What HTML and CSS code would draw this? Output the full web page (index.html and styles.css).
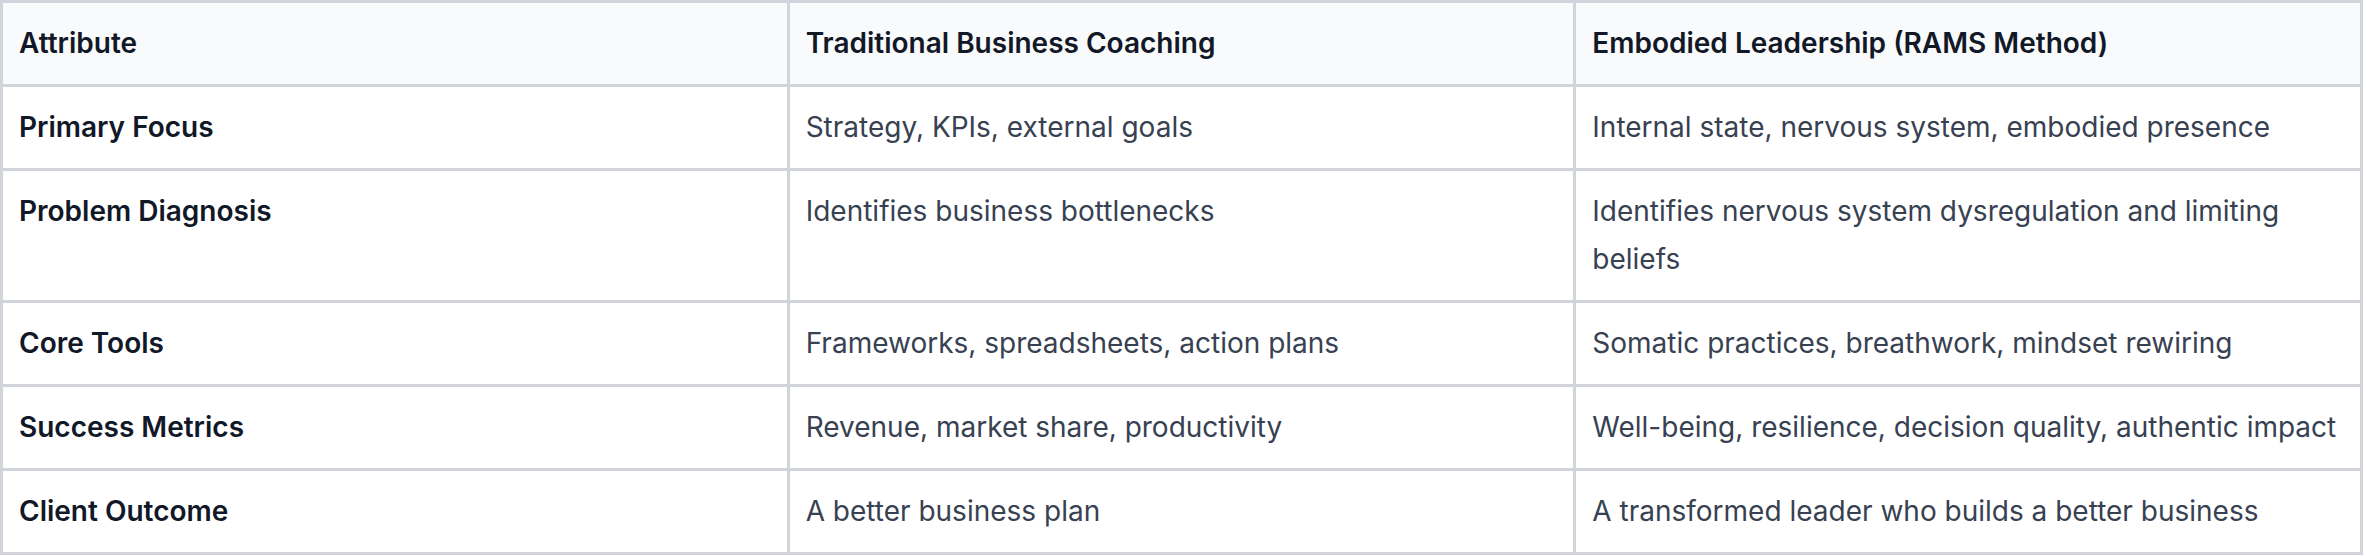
FILE: index.html
```html
<!DOCTYPE html>
<html lang="en">
<head>
<meta charset="utf-8">
<title>Comparison</title>
<link rel="stylesheet" href="styles.css">
</head>
<body>
<table class="compare">
  <thead>
    <tr>
      <th>Attribute</th>
      <th>Traditional Business Coaching</th>
      <th>Embodied Leadership (RAMS Method)</th>
    </tr>
  </thead>
  <tbody>
    <tr>
      <td class="attr">Primary Focus</td>
      <td>Strategy, KPIs, external goals</td>
      <td>Internal state, nervous system, embodied presence</td>
    </tr>
    <tr>
      <td class="attr">Problem Diagnosis</td>
      <td>Identifies business bottlenecks</td>
      <td>Identifies nervous system dysregulation and limiting beliefs</td>
    </tr>
    <tr>
      <td class="attr">Core Tools</td>
      <td>Frameworks, spreadsheets, action plans</td>
      <td>Somatic practices, breathwork, mindset rewiring</td>
    </tr>
    <tr>
      <td class="attr">Success Metrics</td>
      <td>Revenue, market share, productivity</td>
      <td>Well-being, resilience, decision quality, authentic impact</td>
    </tr>
    <tr>
      <td class="attr">Client Outcome</td>
      <td>A better business plan</td>
      <td>A transformed leader who builds a better business</td>
    </tr>
  </tbody>
</table>
</body>
</html>
```

FILE: styles.css
```css
html, body {
  margin: 0;
  padding: 0;
  background: #ffffff;
}

body {
  font-family: Inter, "Noto Sans", sans-serif;
  font-size: 28px;
  line-height: 48px;
  color: #374151;
}

.compare {
  border-collapse: collapse;
  table-layout: fixed;
  width: 2363px;
  margin: 0;
}

.compare th,
.compare td {
  border: 3px solid #d1d5db;
  padding: 16px 16px 17px;
  text-align: left;
  vertical-align: top;
}

.compare th {
  background: #f9fafb;
  color: #111827;
  font-weight: 600;
}

.compare td.attr {
  color: #111827;
  font-weight: 600;
}
```
